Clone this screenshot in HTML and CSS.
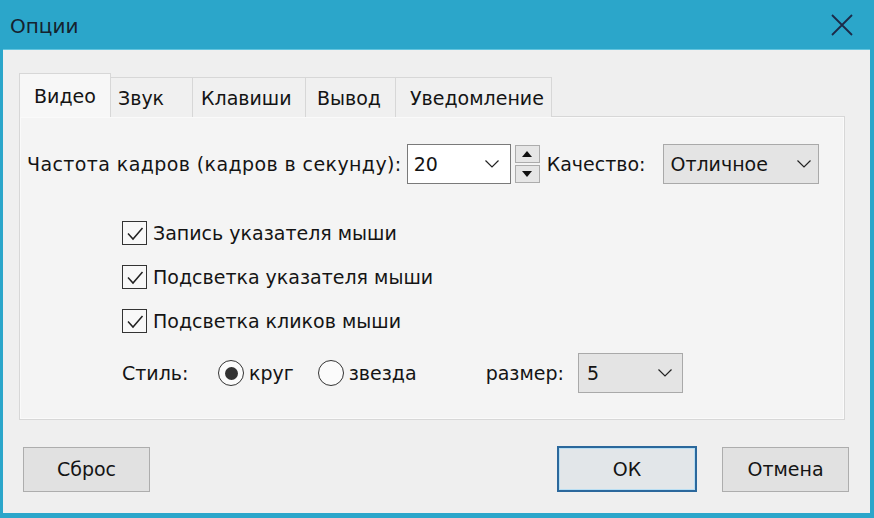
FILE: index.html
```html
<!DOCTYPE html>
<html lang="ru">
<head>
<meta charset="utf-8">
<title>Опции</title>
<link rel="stylesheet" href="styles.css">
</head>
<body>
<div class="window">
  <div class="titlebar">
    <span class="title">Опции</span>
    <svg class="close" width="22" height="22" viewBox="0 0 22 22"><path d="M1 1 L21 21 M21 1 L1 21" stroke="#1c2a48" stroke-width="1.8" fill="none"/></svg>
  </div>
  <div class="body">
    <div class="tabs">
      <div class="tab active">Видео</div>
      <div class="tab t-zvuk">Звук</div>
      <div class="tab t-klav">Клавиши</div>
      <div class="tab t-vyv">Вывод</div>
      <div class="tab t-uv">Уведомление</div>
    </div>
    <div class="panel">
      <div class="row row-fps">
        <span class="lbl lbl-fps">Частота кадров (кадров в секунду):</span>
        <div class="combo combo-fps white"><span>20</span><svg class="chev" width="14" height="8" viewBox="0 0 14 8"><path d="M0.5 0.5 L7 7 L13.5 0.5" stroke="#222" stroke-width="1.2" fill="none"/></svg></div>
        <div class="spin">
          <div class="spin-btn"><svg width="10" height="6" viewBox="0 0 10 6"><path d="M0 6 L5 0 L10 6 Z" fill="#111"/></svg></div>
          <div class="spin-btn"><svg width="10" height="6" viewBox="0 0 10 6"><path d="M0 0 L5 6 L10 0 Z" fill="#111"/></svg></div>
        </div>
        <span class="lbl lbl-q">Качество:</span>
        <div class="combo combo-q"><span>Отличное</span><svg class="chev" width="14" height="8" viewBox="0 0 14 8"><path d="M0.5 0.5 L7 7 L13.5 0.5" stroke="#222" stroke-width="1.2" fill="none"/></svg></div>
      </div>
      <div class="checks">
        <div class="row check-row"><span class="cb"><svg width="22" height="21" viewBox="0 0 22 21"><path d="M4 10.5 L9 16 L18.5 5" stroke="#222" stroke-width="1.5" fill="none"/></svg></span><span class="lbl">Запись указателя мыши</span></div>
        <div class="row check-row"><span class="cb"><svg width="22" height="21" viewBox="0 0 22 21"><path d="M4 10.5 L9 16 L18.5 5" stroke="#222" stroke-width="1.5" fill="none"/></svg></span><span class="lbl">Подсветка указателя мыши</span></div>
        <div class="row check-row"><span class="cb"><svg width="22" height="21" viewBox="0 0 22 21"><path d="M4 10.5 L9 16 L18.5 5" stroke="#222" stroke-width="1.5" fill="none"/></svg></span><span class="lbl">Подсветка кликов мыши</span></div>
        <div class="row style-row">
          <span class="lbl lbl-style">Стиль:</span>
          <span class="radio on"><span class="dot"></span></span>
          <span class="lbl lbl-krug">круг</span>
          <span class="radio"></span>
          <span class="lbl lbl-zv">звезда</span>
          <span class="lbl lbl-size">размер:</span>
          <div class="combo combo-size"><span>5</span><svg class="chev" width="14" height="8" viewBox="0 0 14 8"><path d="M0.5 0.5 L7 7 L13.5 0.5" stroke="#222" stroke-width="1.2" fill="none"/></svg></div>
        </div>
      </div>
    </div>
    <div class="buttons">
      <button class="btn">Сброс</button>
      <span class="spacer"></span>
      <button class="btn btn-ok">ОК</button>
      <button class="btn">Отмена</button>
    </div>
  </div>
</div>
</body>
</html>
```

FILE: styles.css
```css
* { box-sizing: border-box; }
html, body { margin: 0; padding: 0; }
body {
  font-family: "DejaVu Sans", Verdana, sans-serif;
  font-size: 19px;
  color: #141414;
  background: #2ba6ca;
}
.window {
  width: 874px;
  height: 518px;
  background: #2ba6ca;
  padding: 0 4px 5px 3px;
  display: flex;
  flex-direction: column;
}
.titlebar {
  height: 50px;
  flex: none;
  display: flex;
  align-items: center;
  justify-content: space-between;
  padding: 0 17px 0 7px;
  border-bottom: 1px solid #63c4de;
}
.title {
  font-size: 20px;
  color: #15222e;
  margin-top: 2px;
}
.close { display: block; margin-top: 1px; }
.body {
  flex: 1;
  background: #efefef;
  padding: 23px 21px 0 16px;
  display: flex;
  flex-direction: column;
}
.tabs {
  display: flex;
  align-items: flex-end;
  height: 44px;
  margin-bottom: -1px;
  position: relative;
  z-index: 1;
}
.tab {
  height: 40px;
  display: flex;
  align-items: center;
  padding: 0 8px;
  border: 1px solid #d7d7d7;
  border-bottom: none;
  background: #f0f0f0;
  margin-left: -1px;
  white-space: nowrap;
}
.tab.active {
  height: 44px;
  margin-left: 0;
  padding: 0 14px 0 14px;
  width: 92px;
  background: #f7f7f7;
  border-color: #d7d7d7;
}
.t-zvuk { width: 83px; padding-left: 7px; }
.t-klav { width: 114px; }
.t-vyv { width: 91px; padding-left: 11px; }
.t-uv { width: 157px; padding-left: 14px; }
.panel {
  height: 304px;
  flex: none;
  margin-right: 4px;
  border: 1px solid #d7d7d7;
  background: #f4f4f4;
  box-shadow: inset 0 0 0 1px #fafafa;
  padding: 25px 0 0 7px;
  display: flex;
  flex-direction: column;
}
.row {
  display: flex;
  align-items: center;
  height: 44px;
  white-space: nowrap;
}
.lbl-fps { letter-spacing: 0.4px; }
.combo {
  height: 40px;
  display: flex;
  align-items: center;
  justify-content: space-between;
  background: #e4e4e4;
  border: 1px solid #a9a9a9;
  padding: 0 6px 0 6px;
}
.combo.white { background: #ffffff; border-color: #7a7a7a; }
.chev { display: block; flex: none; }
.combo-fps { width: 104px; margin-left: 5px; padding-right: 11px; }
.spin {
  display: flex;
  flex-direction: column;
  gap: 2px;
  margin-left: 4px;
}
.spin-btn {
  width: 25px;
  height: 18px;
  background: #e6e6e6;
  border: 1px solid #acacac;
  display: flex;
  align-items: center;
  justify-content: center;
}
.spin-btn svg { display: block; }
.lbl-q { margin-left: 7px; }
.combo-q { width: 156px; margin-left: 18px; padding-right: 7px; }
.checks {
  padding-left: 95px;
  margin-top: 25px;
  display: flex;
  flex-direction: column;
}
.cb {
  width: 25px;
  height: 24px;
  border: 1px solid #333333;
  background: #f8f8f8;
  display: flex;
  align-items: center;
  justify-content: center;
  margin-right: 6px;
}
.cb svg { display: block; }
.style-row { margin-top: 8px; }
.lbl-style { width: 96px; }
.radio {
  width: 26px;
  height: 26px;
  border: 1.5px solid #333333;
  border-radius: 50%;
  background: #fbfbfb;
  display: flex;
  align-items: center;
  justify-content: center;
  margin-right: 5px;
}
.radio .dot {
  width: 13px;
  height: 13px;
  border-radius: 50%;
  background: #333333;
}
.lbl-krug { margin-right: 24px; }
.lbl-zv { margin-right: 69px; }
.combo-size { width: 105px; margin-left: 14px; padding-left: 8px; padding-right: 10px; }
.buttons {
  display: flex;
  margin: 26px 0 0 4px;
  height: 46px;
  align-items: center;
}
.spacer { flex: 1; }
.btn {
  font-family: "DejaVu Sans", Verdana, sans-serif;
  font-size: 19px;
  color: #141414;
  width: 127px;
  height: 45px;
  background: #e1e1e1;
  border: 1px solid #adadad;
  padding: 0;
  margin: 0;
}
.btn-ok {
  width: 140px;
  height: 46px;
  border: 2px solid #2b689c;
  box-shadow: inset 0 0 0 1px #b8def3;
  background: #e2e6e9;
  margin-right: 25px;
}
```
